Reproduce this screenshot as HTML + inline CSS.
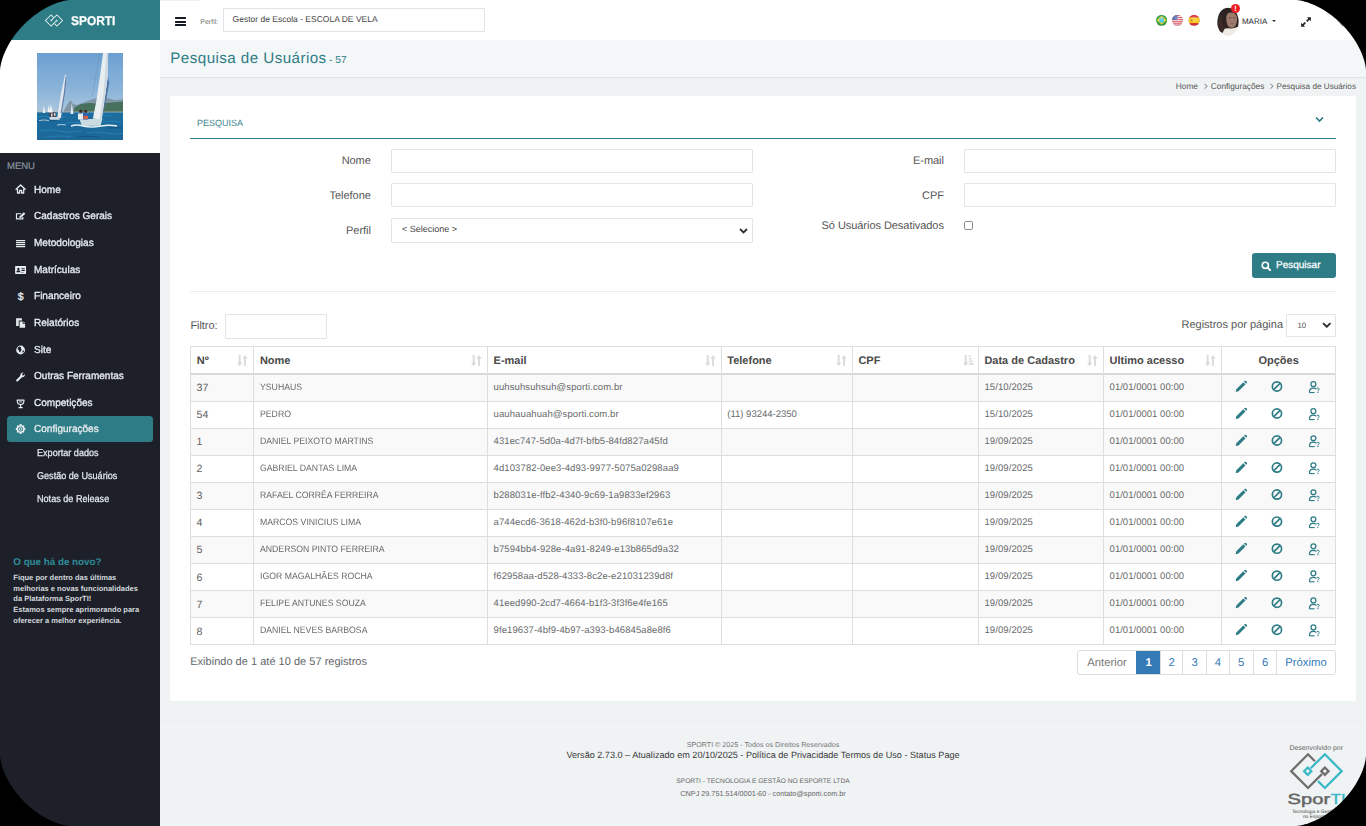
<!DOCTYPE html>
<html lang="pt-br">
<head>
<meta charset="utf-8">
<title>Pesquisa de Usuários</title>
<style>
*{box-sizing:border-box;margin:0;padding:0}
html,body{width:1366px;height:826px;overflow:hidden;background:#f0f3f4}
body{font-family:"Liberation Sans",sans-serif;color:#4f4f4f;position:relative;font-size:11px;text-rendering:geometricPrecision}
#screen{position:absolute;left:0;top:0;width:1366px;height:826px;background:#f0f3f4;overflow:hidden}
.corner{position:absolute;width:72px;height:72px;z-index:50}
.corner.tl{left:0;top:0;background:radial-gradient(circle at 100% 100%,rgba(0,0,0,0) 70.4px,#000 71.4px)}
.corner.tr{right:0;top:0;background:radial-gradient(circle at 0 100%,rgba(0,0,0,0) 70.4px,#000 71.4px)}
.corner.bl{left:0;bottom:0;background:radial-gradient(circle at 100% 0,rgba(0,0,0,0) 70.4px,#000 71.4px)}
.corner.br{right:0;bottom:0;background:radial-gradient(circle at 0 0,rgba(0,0,0,0) 70.4px,#000 71.4px)}
span,div{white-space:nowrap}
/* sidebar */
#side{position:absolute;left:0;top:0;width:160px;height:826px;background:#1d2029}
#brand{position:absolute;left:0;top:0;width:160px;height:40px;background:#2e7c86}
#brand .t{position:absolute;left:71.4px;top:13.6px;font-size:12.6px;line-height:14px;font-weight:bold;color:#fff;-webkit-text-stroke:.25px #fff;transform:scaleX(.945);transform-origin:0 0}
#brand svg{position:absolute;left:43px;top:12px;width:22px;height:17px}
#club{position:absolute;left:0;top:40px;width:160px;height:113px;background:#fff}
#club svg{position:absolute;left:37px;top:13px;width:86px;height:87px}
#menuh{position:absolute;left:7px;top:161px;font-size:9.5px;line-height:11px;color:#8a93a0;-webkit-text-stroke:.2px #8a93a0}
.mi{position:absolute;left:33.8px;font-size:10.2px;line-height:12px;color:#e6ecef;-webkit-text-stroke:.32px #e6ecef;transform:scaleX(.985);transform-origin:0 0}
.mic{position:absolute;left:15px;width:12px;height:12px}
.sub{position:absolute;left:37px;font-size:9.9px;line-height:12px;color:#e4eaed;-webkit-text-stroke:.25px #e4eaed;transform:scaleX(.92);transform-origin:0 0}
#active{position:absolute;left:7px;top:416px;width:146px;height:26px;background:#2e7c86;border-radius:3.5px}
#news{position:absolute;left:13.3px;top:557.2px;font-size:9.8px;line-height:12px;font-weight:bold;color:#2e8d99}
.nb{position:absolute;left:13.3px;font-size:7.5px;line-height:10.8px;font-weight:bold;color:#d3d8dc}
/* header */
#top{position:absolute;left:160px;top:0;width:1206px;height:40px;background:#fff}
#burger{position:absolute;left:14.7px;top:17px;width:11px;height:9px}
#burger i{position:absolute;left:0;width:11px;height:2px;background:#151b24;border-radius:.6px}
#plabel{position:absolute;left:40.3px;top:18.2px;font-size:7px;line-height:9px;color:#777}
#psel{position:absolute;left:63.3px;top:8.3px;width:261.4px;height:24.2px;border:1px solid #e3e4e6;background:#fff;border-radius:1px}
#psel span{position:absolute;left:8.3px;top:5px;font-size:8.5px;line-height:10px;color:#444}
.flag{position:absolute;top:14.8px;width:11.6px;height:11.6px}
#avatar{position:absolute;left:1056.5px;top:7.5px;width:22px;height:28.5px}
#badge{position:absolute;left:1070.8px;top:4.1px;width:9.2px;height:9.2px;border-radius:50%;background:#ee1c25;color:#fff;font-size:7.5px;font-weight:bold;line-height:9.2px;text-align:center}
#uname{position:absolute;left:1081.9px;top:17px;font-size:8px;line-height:10px;color:#2f2f2f}
#caret{position:absolute;left:1112px;top:20.1px;width:0;height:0;border-left:2px solid transparent;border-right:2px solid transparent;border-top:2px solid #333}
#expand{position:absolute;left:1140px;top:16px;width:12px;height:12px}
#title{position:absolute;left:160px;top:40px;width:1206px;height:37.7px;background:#f4f7f7;border-bottom:1px solid #dfe2e8}
#title h1{position:absolute;left:10.3px;top:8.6px;font-size:15.2px;line-height:20px;font-weight:normal;color:#2e7c86;letter-spacing:.43px}
#title h1 small{font-size:10.3px;letter-spacing:0;margin-left:-.6px}
.crumb{position:absolute;top:80.5px;font-size:8.3px;line-height:11px;color:#555}
.card{position:absolute;left:170px;top:96px;width:1186px;height:605.3px;background:#fff;border-radius:3px}
/* form */
#ptitle{position:absolute;left:197px;top:117.5px;font-size:9px;line-height:11px;color:#3d8791}
#pline{position:absolute;left:190px;top:138px;width:1146px;height:1.2px;background:#2e7c86}
#chev{position:absolute;left:1314.5px;top:116px;width:9px;height:7px}
.lbl{position:absolute;font-size:11px;line-height:14px;color:#555;text-align:right;letter-spacing:-.05px}
.inp{position:absolute;border:1px solid #e4e5e7;background:#fff;border-radius:1px}
#hr{position:absolute;left:190px;top:290.8px;width:1146px;height:1px;background:#ececec}
#btn{position:absolute;left:1252px;top:253px;width:84px;height:24.8px;background:#2e7c86;border-radius:3px}
#btn span{position:absolute;left:24px;top:7.4px;font-size:10px;line-height:12px;color:#fff;-webkit-text-stroke:.25px #fff}
#btn svg{position:absolute;left:8.6px;top:7.6px;width:10.6px;height:10.6px}
#cb{position:absolute;left:964px;top:221px;width:8.6px;height:8.6px;border:1px solid #8a8a8a;border-radius:1.8px;background:#fff}
.selchev{position:absolute;width:9px;height:6px}
/* table */
.tbl{position:absolute;left:0;top:0}
.row{position:absolute;left:190.4px;width:1145.1px}
.c{position:absolute;top:var(--ty);font-size:9.5px;line-height:11px;color:#676a6c}
.c.n{font-size:10.6px;top:calc(var(--ty) + .2px);line-height:13px;color:#5f5f5f}
.c.nm{font-size:9.25px;transform:scaleX(.94);transform-origin:0 0}
.c.em{letter-spacing:.1px}
.c.ph{letter-spacing:0}
.c.dt{letter-spacing:.1px}
.c.la{letter-spacing:.03px}
.ic{position:absolute;top:calc(var(--ty) - .6px);width:12px;height:12px}
.ic.pen{left:1044.6px}
.ic.ban{left:1080.5px}
.ic.usr{left:1117px}
.hl{position:absolute;left:190.1px;width:1145.9px;height:1px;background:#dedede}
.hl2{position:absolute;left:190.1px;width:1145.9px;height:2.2px;top:372.6px;background:#d8d8d8}
.vl{position:absolute;top:345.9px;width:1px;height:298.8px;background:#dedede}
.th{position:absolute;top:355px;font-size:11px;line-height:13px;font-weight:bold;color:#4a4a4a}
.sort{position:absolute;top:355.2px;width:11px;height:11.3px}
#info{position:absolute;left:190.2px;top:655px;font-size:11px;line-height:14px;color:#62666a;letter-spacing:.02px}
#pag{position:absolute;left:1077.2px;top:650.3px;height:24.6px;width:258.6px;border:1px solid #ddd;border-radius:3px;background:#fff;overflow:hidden}
#pag span{position:absolute;top:0;height:22.6px;line-height:24.4px;font-size:11.3px;color:#337ab7;text-align:center;border-left:1px solid #ddd}
/* footer */
#fline{position:absolute;left:160px;top:720.6px;width:1206px;height:1px;background:#eceeef}
.ft{position:absolute;left:160px;width:1206px;text-align:center}

</style>
</head>
<body>
<div id="screen">
<svg width="0" height="0" style="position:absolute">
<defs>
<symbol id="i-home" viewBox="0 0 12 12"><path d="M1.500 6.300 6 2 10.500 6.300" fill="none" stroke="#e6ecef" stroke-width="1.400" stroke-linecap="round" stroke-linejoin="round"/><path d="M2.900 5.800V10H5V7.400H7V10H9.100V5.800" fill="none" stroke="#e6ecef" stroke-width="1.300" stroke-linejoin="round"/></symbol>
<symbol id="i-edit" viewBox="0 0 12 12"><path d="M6.600 3.700H1.900V8.800H8.200V7" fill="none" stroke="#e6ecef" stroke-width="1.150"/><path d="M4.700 8 5.100 6.300 9.200 2.300 10.700 3.800 6.500 7.700Z" fill="#e6ecef"/></symbol>
<symbol id="i-list" viewBox="0 0 12 12"><path d="M1.450 2h9.100v1.250h-9.100zM1.450 4h9.100v1.250h-9.100zM1.450 6h9.100v1.250h-9.100zM1.450 8h9.100v1.250h-9.100z" fill="#e6ecef"/></symbol>
<symbol id="i-card" viewBox="0 0 12 12"><path d="M1.200 2.100h9.600a.7.700 0 0 1 .7.700v6.400a.7.700 0 0 1-.7.700H1.200a.7.700 0 0 1-.7-.7V2.800a.7.700 0 0 1 .7-.7Z M3.800 3.700a1.150 1.150 0 1 0 .01 0Z M1.800 8.300h4c0-1.500-.7-2.100-2-2.100s-2 .6-2 2.100Z M6.900 4.300h3.300v.9H6.900Z M6.900 6.100h3.300v.9H6.900Z M6.900 7.900h2v.6h-2Z" fill="#e6ecef" fill-rule="evenodd"/></symbol>
<symbol id="i-copy" viewBox="0 0 12 12"><path d="M1.500 1.300H7.300V3.500H4.100V8.900H1.500Z" fill="#e6ecef"/><path d="M5 4.400H8.100V6.800H10.500V10.700H5Z M8.900 4.400 10.500 6H8.900Z" fill="#e6ecef"/></symbol>
<symbol id="i-globe" viewBox="0 0 12 12"><circle cx="6" cy="6" r="4.400" fill="#e6ecef"/><path d="M3.300 3.400 5 2.600 6.600 3.300 6.200 4.700 7.200 5.800 6 7.200 5.800 8.600 4.600 7.800 4.300 6.200 3 5.200Z M7.800 6.700 9.400 6.400 9.300 7.800 8 9Z" fill="#1c1f28"/></symbol>
<symbol id="i-wrench" viewBox="0 0 12 12"><path d="M2.600 9.400 6.600 5.400" stroke="#e6ecef" stroke-width="2.100" stroke-linecap="round"/><path d="M10.300 3.100 8.900 4.500 7.700 4.300 7.500 3.100 8.900 1.700A2.600 2.600 0 0 0 5.800 5L7 6.200A2.600 2.600 0 0 0 10.300 3.100Z" fill="#e6ecef"/></symbol>
<symbol id="i-trophy" viewBox="0 0 12 12"><path d="M2.600 2.200H9.400C9.400 4.700 8 6.500 6 6.500S2.600 4.700 2.600 2.200Z" fill="none" stroke="#e6ecef" stroke-width="1.200" stroke-linejoin="round"/><path d="M6 6.500V9.500M3.900 9.700H8.100" stroke="#e6ecef" stroke-width="1.200" fill="none"/><path d="M4.300 3.100H7.700C7.600 4.300 7 5.200 6 5.200S4.400 4.300 4.300 3.100Z" fill="#e6ecef" opacity=".5"/></symbol>
<symbol id="i-cog" viewBox="0 0 12 12"><g fill="#e6ecef"><path d="M6 1.100 7 1.300 7.300 2.300 8.200 2.700 9.200 2.200 9.900 2.900 9.400 3.900 9.800 4.800 10.800 5.100V6.900L9.800 7.200 9.400 8.100 9.900 9.100 9.200 9.800 8.200 9.300 7.300 9.700 7 10.700 6 10.900 5 10.700 4.700 9.700 3.800 9.300 2.800 9.800 2.100 9.100 2.600 8.100 2.200 7.200 1.200 6.900V5.100L2.200 4.800 2.600 3.900 2.100 2.900 2.800 2.200 3.800 2.700 4.700 2.300 5 1.300Z M6 3.500a2.500 2.500 0 1 0 .01 0Z M6 4.300a1.700 1.700 0 1 1-.01 0Z M6 5.200a.8.800 0 1 0 .01 0Z" fill-rule="evenodd"/></g></symbol>
<symbol id="i-pen" viewBox="0 0 12 12"><path d="M.4 11.600 1.100 8.700 8.100 1.700 10.300 3.900 3.300 10.900Z M8.800 1 9.600 .2a.75.750 0 0 1 1.050 0L11.800 1.350a.75.750 0 0 1 0 1.050L11 3.200Z" fill="#2e7c86"/></symbol>
<symbol id="i-ban" viewBox="0 0 12 12"><circle cx="6" cy="6" r="4.600" fill="none" stroke="#2e7c86" stroke-width="1.700"/><path d="M2.800 9.200 9.200 2.800" stroke="#2e7c86" stroke-width="1.700"/></symbol>
<symbol id="i-usr" viewBox="0 0 12 13"><circle cx="5.400" cy="3.700" r="2.450" fill="none" stroke="#2e7c86" stroke-width="1.250"/><path d="M1.500 12.200V11.300C1.500 9 3 7.700 5.300 7.700c1.100 0 2 .3 2.700 .9M1.500 12.100H6.600" fill="none" stroke="#2e7c86" stroke-width="1.250"/><path d="M8.600 8.800c.1-.8 .7-1.200 1.300-1.200 .7 0 1.300 .5 1.300 1.200 0 1-1.300 1-1.300 2.100" fill="none" stroke="#2e7c86" stroke-width="1"/><circle cx="9.900" cy="12" r=".65" fill="#2e7c86"/></symbol>
<symbol id="i-sort" viewBox="0 0 11 11.300"><path d="M1.700 0h2v7.600h1.700L2.700 11.300 0 7.600h1.700Z M7 11.300h2V3.700h1.700L8 0 5.300 3.700H7Z" fill="#dcdcdc"/></symbol>
<symbol id="i-sorta" viewBox="0 0 11 11.300"><path d="M1.700 0h2v7.600h1.700L2.700 11.300 0 7.600h1.700Z" fill="#dcdcdc"/><path d="M5.700 .2h2v1.700h-2zM5.700 2.900h2.900v1.700H5.700zM5.700 5.600h4v1.700h-4zM5.700 8.200h5.100v1.700H5.700z" fill="#dcdcdc"/></symbol>
</defs>
</svg>

<div id="side">
  <div id="brand">
    <svg viewBox="43 12 22 17" fill="none" stroke="#d9eaec" stroke-width="1.050" stroke-linejoin="miter"><path d="M53.500 17.300 51.100 14.900 45.500 20.500 51.100 26.100 56.300 20.900"/><path d="M51.700 19.900 56.900 14.900 62.500 20.500 56.900 26.100 54.500 23.700"/><circle cx="51.300" cy="20.400" r=".9" fill="#d9eaec" stroke="none"/><circle cx="56.700" cy="20.600" r=".9" fill="#d9eaec" stroke="none"/></svg>
    <span class="t">SPORTI</span>
  </div>
  <div id="club">
    <svg viewBox="0 0 86 87" preserveAspectRatio="none"><defs><linearGradient id="sky" x1="0" y1="0" x2="0" y2="1"><stop offset="0" stop-color="#6a9fd1"/><stop offset=".55" stop-color="#86b1d8"/><stop offset="1" stop-color="#aac7de"/></linearGradient><linearGradient id="sea" x1="0" y1="0" x2="0" y2="1"><stop offset="0" stop-color="#1d6d9f"/><stop offset=".5" stop-color="#1a6a9c"/><stop offset="1" stop-color="#1c6596"/></linearGradient><filter id="bl" x="-5%" y="-5%" width="110%" height="110%"><feGaussianBlur stdDeviation=".35"/></filter><clipPath id="cp"><rect width="86" height="87"/></clipPath></defs>
      <g clip-path="url(#cp)"><g filter="url(#bl)">
      <rect x="-2" y="-2" width="90" height="62" fill="url(#sky)"/>
      <path d="M26 59 L30 52 L33.500 46.900 L36 51 L40 52 L52 47.500 L58 45.500 L70 45 L78 47 L88 46 L88 59Z" fill="#8195a8"/>
      <path d="M36 59 L38 54 L44 51 L52 50 L60 50.500 L70 50 L80 49 L88 48.500 L88 59Z" fill="#476f5d"/>
      <rect x="-2" y="58.600" width="90" height="1" fill="#b9b5a8"/>
      <rect x="-2" y="59.400" width="90" height="30" fill="url(#sea)"/>
      <path d="M0 64 q8 -1.500 14 0 t14 0 M30 70 q8 -1.500 16 0 M2 78 q10 -2 20 0 t22 0 M50 80 q10 -2 20 0 t16 0 M60 63 q8 -1 16 0 M10 84 q12 -2 24 0 M66 69 q8 -1.500 18 0" stroke="#2c86b6" stroke-width="1.100" fill="none" opacity=".8"/>
      <path d="M0 68 q10 -1.500 20 0 M40 84 q10 -1.500 22 0 M70 75 q8 -1 16 0" stroke="#124f7d" stroke-width="1" fill="none" opacity=".7"/>
      <path d="M71 23 L72.200 30 L69 48 L66 60 L64.500 60 L68.500 40Z" fill="#4f74a6"/>
      <path d="M66.200 -1 L71.100 -1 L70.600 24 L68 44 L64.600 66.800 L55.900 65.400 L59.500 47 L63.300 21Z" fill="#e9eef1"/>
      <path d="M69.500 0 L71.100 0 L70.600 24 L68 44 L64.600 66.800 L62.500 66.500 L66.500 40Z" fill="#cfd9e2"/>
      <path d="M54 25 L60.500 26 M63 0 L55 44" stroke="#6f8aa8" stroke-width=".4" fill="none"/>
      <path d="M28.100 21 L29.700 24 L28.200 40 L23.900 65 L20.200 64.400 L23.800 42Z" fill="#e3e9ee"/>
      <path d="M28.600 23 L29.700 24 L28.200 40 L24.800 60 L23.600 60 L26.800 40Z" fill="#5e7fa6"/>
      <path d="M6.900 52 L8.300 60 L5.900 60Z M13.800 51 L16 60 L12 60Z M11.500 52 L13 59 L10.500 59Z" fill="#eef2f5"/>
      <path d="M34.700 50 L36.400 61 L33.600 61Z" fill="#e6ecf1"/>
      <path d="M42.600 66.500 L65.600 65.600 L63.500 72.800 L45 72.900Z" fill="#c9dbe0"/>
      <path d="M12.300 64 L23.200 64 L22.500 66.800 L13 66.800Z" fill="#cfdde2"/>
      <path d="M34 73 q6 -2 12 0 q8 2 18 0 q8 -1.500 16 0" stroke="#e6f0f4" stroke-width="1.500" fill="none"/>
      <path d="M2 67.500 q6 -1 10 0 M20 72 q5 -1 9 0" stroke="#d5e6ee" stroke-width=".8" fill="none"/>
      <circle cx="43.800" cy="58.300" r="1.500" fill="#3b2a23"/><circle cx="48.600" cy="58.300" r="1.500" fill="#3b2a23"/>
      <path d="M41 60.500 h5 v6 h-5z" fill="#e9ecee"/><path d="M46.200 60.500 h5 v6 h-5z" fill="#3f5fae"/><path d="M46.500 63 h4.500 v3 h-4.500z" fill="#d3603f"/>
      <path d="M12.300 59.500 h6.700 v4.300 h-6.700z" fill="#4a3f48"/><path d="M14 60.500 h1.500 v3 h-1.500z M17 60 h1.400 v3 h-1.400z" fill="#d9dde2"/>
      </g></g>
    </svg>
  </div>
  <div id="menuh">MENU</div>
  <div id="active"></div>
  <svg class="mic" style="top:183px" viewBox="0 0 12 12"><use href="#i-home" x="-.4"/></svg>
<span class="mi" style="top:184.5px">Home</span>
<svg class="mic" style="top:210px" viewBox="0 0 12 12"><use href="#i-edit" x="-.4"/></svg>
<span class="mi" style="top:211.2px">Cadastros Gerais</span>
<svg class="mic" style="top:238px" viewBox="0 0 12 12"><use href="#i-list" x="-.4"/></svg>
<span class="mi" style="top:237.9px">Metodologias</span>
<svg class="mic" style="top:264px" viewBox="0 0 12 12"><use href="#i-card" x="-.4"/></svg>
<span class="mi" style="top:264.5px">Matrículas</span>
<span class="mi" style="left:17.7px;top:291.0px;font-size:10.5px;transform:none">$</span>
<span class="mi" style="top:291.2px">Financeiro</span>
<svg class="mic" style="top:317px" viewBox="0 0 12 12"><use href="#i-copy" x="-.4"/></svg>
<span class="mi" style="top:317.9px">Relatórios</span>
<svg class="mic" style="top:344px" viewBox="0 0 12 12"><use href="#i-globe" x="-.4"/></svg>
<span class="mi" style="top:344.6px">Site</span>
<svg class="mic" style="top:371px" viewBox="0 0 12 12"><use href="#i-wrench" x="-.4"/></svg>
<span class="mi" style="top:371.3px">Outras Ferramentas</span>
<svg class="mic" style="top:398px" viewBox="0 0 12 12"><use href="#i-trophy" x="-.4"/></svg>
<span class="mi" style="top:397.9px">Competições</span>
<svg class="mic" style="top:423px" viewBox="0 0 12 12"><use href="#i-cog" x="-.4"/></svg>
<span class="mi" style="top:423.7px">Configurações</span>
  <span class="sub" style="top:447.7px">Exportar dados</span>
  <span class="sub" style="top:470.7px">Gestão de Usuários</span>
  <span class="sub" style="top:494.3px">Notas de Release</span>
  <div id="news">O que há de novo?</div>
  <span class="nb" style="top:572.90px">Fique por dentro das últimas</span><span class="nb" style="top:583.69px">melhorias e novas funcionalidades</span><span class="nb" style="top:594.48px">da Plataforma SporTI!</span><span class="nb" style="top:605.27px">Estamos sempre aprimorando para</span><span class="nb" style="top:616.06px">oferecer a melhor experiência.</span>
</div>

<div id="top">
  <div style="position:absolute;left:0;top:0;width:39px;height:1px;background:#efefef"></div><div id="burger"><i style="top:0"></i><i style="top:3.6px"></i><i style="top:7.1px"></i></div>
  <span id="plabel">Perfil:</span>
  <div id="psel"><span>Gestor de Escola - ESCOLA DE VELA</span></div>
  <svg style="position:absolute;left:994px;top:4px;width:90px;height:34px" viewBox="1154 4 90 34">
<defs><radialGradient id="gl" cx=".5" cy=".3" r=".75"><stop offset="0" stop-color="#fff" stop-opacity=".28"/><stop offset=".6" stop-color="#fff" stop-opacity="0"/><stop offset="1" stop-color="#000" stop-opacity=".28"/></radialGradient>
<clipPath id="f1"><circle cx="1161.600" cy="20.300" r="5.550"/></clipPath><clipPath id="f2"><circle cx="1177.500" cy="20.300" r="5.550"/></clipPath><clipPath id="f3"><circle cx="1194.100" cy="20.300" r="5.550"/></clipPath>
<clipPath id="av"><ellipse cx="1227.900" cy="21.800" rx="10.750" ry="14.100"/></clipPath><filter id="b2" x="-10%" y="-10%" width="120%" height="120%"><feGaussianBlur stdDeviation=".45"/></filter></defs>
<g clip-path="url(#f1)"><rect x="1156" y="14.700" width="11.200" height="11.200" fill="#2f9a3a"/><path d="M1161.600 16.100 1166.700 20.300 1161.600 24.500 1156.500 20.300Z" fill="#f1d32c"/><circle cx="1161.600" cy="20.300" r="2.500" fill="#43c3e3"/><rect x="1156" y="14.700" width="11.200" height="11.200" fill="url(#gl)"/></g>
<g clip-path="url(#f2)"><rect x="1171.900" y="14.700" width="11.200" height="11.200" fill="#f5f2f3"/><path d="M1171 15.600h13M1171 17.500h13M1171 19.400h13M1171 21.300h13M1171 23.200h13M1171 25.100h13" stroke="#dc3a4b" stroke-width=".95"/><rect x="1171.900" y="14.700" width="5.600" height="5.200" fill="#5468b0"/><rect x="1171.900" y="14.700" width="11.200" height="11.200" fill="url(#gl)"/></g>
<g clip-path="url(#f3)"><rect x="1188.500" y="14.700" width="11.200" height="11.200" fill="#d7212c"/><rect x="1188.500" y="17.500" width="11.200" height="5.600" fill="#f8cc1f"/><rect x="1190.800" y="19" width="1.700" height="2.500" fill="#c0782a"/><rect x="1188.500" y="14.700" width="11.200" height="11.200" fill="url(#gl)"/></g>
<g clip-path="url(#av)"><g filter="url(#b2)">
<rect x="1216" y="6" width="24" height="32" fill="#e9e5de"/>
<path d="M1216 6h10l-4 8-4 12-2 4Z" fill="#86d6d6"/>
<path d="M1218 36 C1216.500 28 1217 18 1219.500 13 C1222 8 1228 6.500 1232 8 C1236.500 9.500 1239 14 1239 20 L1238.500 30 L1234 29 L1228 31 L1224 36Z" fill="#2f2220"/>
<path d="M1227 14.500 C1229 11.500 1235 12 1236.600 16 C1237.600 19 1237 23 1235.300 26 C1234 28 1230.500 28.500 1228.800 26.800 C1226.500 24.500 1225.500 18 1227 14.500Z" fill="#9c7a6c"/>
<path d="M1229 17.800h2.300M1233.300 17.800h2" stroke="#5a3f36" stroke-width=".8"/><path d="M1230.600 23.500q1.600 .8 3.200 0" stroke="#8a4f48" stroke-width=".8" fill="none"/>
<path d="M1219 37 C1220 31 1224 27.500 1229 28.300 C1233 29 1237 27.500 1240 25.500 L1240 38 L1219 38Z" fill="#eeebe4"/>
<path d="M1217.500 30 C1217 24 1218 17 1220.500 13.500 C1222 18 1222.500 24 1224.500 29 L1222.500 33Z" fill="#3a2a25"/>
</g></g>
</svg>
<div id="badge">!</div>
  <span id="uname">MARIA</span>
  <div id="caret"></div>
  <svg id="expand" viewBox="0 0 12 12"><path d="M6.900 1.200h4v4L9.500 3.800 7.300 6 6.100 4.800 8.300 2.600Z M5.100 10.800h-4v-4l1.400 1.400L4.700 6l1.200 1.200-2.200 2.200Z" fill="#222"/></svg>
<svg style="position:absolute;left:1176px;top:18px;width:9px;height:9px" viewBox="0 0 9 9"><path d="M1.500 1.500 7 8" stroke="#9a9a9a" stroke-width="1.300"/></svg>
</div>
<div id="title"><h1>Pesquisa de Usuários<small> - 57</small></h1></div>
<span class="crumb" style="left:1175.8px">Home</span>
<svg style="position:absolute;left:1203px;top:82px;width:6px;height:9px" viewBox="1203 82 6 9"><path d="M1204.500 84 1207.200 86.300 1204.500 88.600" fill="none" stroke="#666" stroke-width=".85"/></svg>
<span class="crumb" style="left:1210.8px">Configurações</span>
<svg style="position:absolute;left:1269px;top:82px;width:6px;height:9px" viewBox="1269 82 6 9"><path d="M1270.400 84 1273.100 86.300 1270.400 88.600" fill="none" stroke="#666" stroke-width=".85"/></svg>
<span class="crumb" style="left:1276.5px;font-size:8.18px">Pesquisa de Usuários</span>

<div class="card"></div>
<span id="ptitle">PESQUISA</span>
<svg id="chev" viewBox="0 0 9 7"><path d="M1 1.500 4.500 5 8 1.500" fill="none" stroke="#2e7c86" stroke-width="1.700"/></svg>
<div id="pline"></div>
<span class="lbl" style="left:190px;width:180.8px;top:153.8px">Nome</span>
<span class="lbl" style="left:190px;width:180.8px;top:189.1px">Telefone</span>
<span class="lbl" style="left:190px;width:180.8px;top:224.2px">Perfil</span>
<span class="lbl" style="left:763px;width:180.9px;top:153.8px">E-mail</span>
<span class="lbl" style="left:763px;width:180.9px;top:189.1px">CPF</span>
<span class="lbl" style="left:763px;width:180.9px;top:218.8px">Só Usuários Desativados</span>
<div class="inp" style="left:391px;top:149px;width:361.5px;height:24px"></div>
<div class="inp" style="left:391px;top:183px;width:361.5px;height:24px"></div>
<div class="inp" style="left:391px;top:218.2px;width:361.5px;height:24.4px"><span style="position:absolute;left:10px;top:5px;font-size:9px;line-height:11px;color:#444">&lt; Selecione &gt;</span></div>
<svg class="selchev" style="left:739.2px;top:227.6px" viewBox="0 0 9 6"><path d="M1 1 4.500 4.500 8 1" fill="none" stroke="#333" stroke-width="1.800"/></svg>
<div class="inp" style="left:964px;top:149px;width:372px;height:24px"></div>
<div class="inp" style="left:964px;top:183px;width:372px;height:24px"></div>
<div id="cb"></div>
<div id="btn"><svg viewBox="0 0 11 11"><circle cx="4.500" cy="4.500" r="3.200" fill="none" stroke="#fff" stroke-width="1.700"/><path d="M6.800 6.800 10 10" stroke="#fff" stroke-width="2" stroke-linecap="round"/></svg><span>Pesquisar</span></div>
<div id="hr"></div>
<span class="lbl" style="left:190.4px;top:319.3px;text-align:left">Filtro:</span>
<div class="inp" style="left:225.3px;top:314.2px;width:101.4px;height:24.4px"></div>
<span class="lbl" style="left:1181.5px;top:318.3px;text-align:left;letter-spacing:0">Registros por página</span>
<div class="inp" style="left:1286.4px;top:314px;width:49.6px;height:22.6px"><span style="position:absolute;left:10px;top:6px;font-size:7.800px;line-height:10px;color:#555">10</span></div>
<svg class="selchev" style="left:1322px;top:322px;width:9.600px;height:6.400px" viewBox="0 0 9 6"><path d="M1 1 4.500 4.500 8 1" fill="none" stroke="#333" stroke-width="1.800"/></svg>

<div class="tbl">
<div class="row" style="top:374.40px;height:26.80px;background:#f9f9f9;--ty:7.70px"><span class="c n" style="left:6.2px">37</span><span class="c nm" style="left:69.5px">YSUHAUS</span><span class="c em" style="left:303.2px">uuhsuhsuhsuh@sporti.com.br</span><span class="c ph" style="left:536.9px"></span><span class="c dt" style="left:794.0px">15/10/2025</span><span class="c la" style="left:919.2px">01/01/0001 00:00</span></div>
<div class="row" style="top:401.20px;height:27.03px;background:#fff;--ty:7.93px"><span class="c n" style="left:6.2px">54</span><span class="c nm" style="left:69.5px">PEDRO</span><span class="c em" style="left:303.2px">uauhauahuah@sporti.com.br</span><span class="c ph" style="left:536.9px">(11) 93244-2350</span><span class="c dt" style="left:794.0px">15/10/2025</span><span class="c la" style="left:919.2px">01/01/0001 00:00</span></div>
<div class="row" style="top:428.23px;height:27.03px;background:#f9f9f9;--ty:7.93px"><span class="c n" style="left:6.2px">1</span><span class="c nm" style="left:69.5px">DANIEL PEIXOTO MARTINS</span><span class="c em" style="left:303.2px">431ec747-5d0a-4d7f-bfb5-84fd827a45fd</span><span class="c ph" style="left:536.9px"></span><span class="c dt" style="left:794.0px">19/09/2025</span><span class="c la" style="left:919.2px">01/01/0001 00:00</span></div>
<div class="row" style="top:455.26px;height:27.03px;background:#fff;--ty:7.93px"><span class="c n" style="left:6.2px">2</span><span class="c nm" style="left:69.5px">GABRIEL DANTAS LIMA</span><span class="c em" style="left:303.2px">4d103782-0ee3-4d93-9977-5075a0298aa9</span><span class="c ph" style="left:536.9px"></span><span class="c dt" style="left:794.0px">19/09/2025</span><span class="c la" style="left:919.2px">01/01/0001 00:00</span></div>
<div class="row" style="top:482.29px;height:27.03px;background:#f9f9f9;--ty:7.93px"><span class="c n" style="left:6.2px">3</span><span class="c nm" style="left:69.5px">RAFAEL CORRÊA FERREIRA</span><span class="c em" style="left:303.2px">b288031e-ffb2-4340-9c69-1a9833ef2963</span><span class="c ph" style="left:536.9px"></span><span class="c dt" style="left:794.0px">19/09/2025</span><span class="c la" style="left:919.2px">01/01/0001 00:00</span></div>
<div class="row" style="top:509.32px;height:27.03px;background:#fff;--ty:7.93px"><span class="c n" style="left:6.2px">4</span><span class="c nm" style="left:69.5px">MARCOS VINICIUS LIMA</span><span class="c em" style="left:303.2px">a744ecd6-3618-462d-b3f0-b96f8107e61e</span><span class="c ph" style="left:536.9px"></span><span class="c dt" style="left:794.0px">19/09/2025</span><span class="c la" style="left:919.2px">01/01/0001 00:00</span></div>
<div class="row" style="top:536.35px;height:27.03px;background:#f9f9f9;--ty:7.93px"><span class="c n" style="left:6.2px">5</span><span class="c nm" style="left:69.5px">ANDERSON PINTO FERREIRA</span><span class="c em" style="left:303.2px">b7594bb4-928e-4a91-8249-e13b865d9a32</span><span class="c ph" style="left:536.9px"></span><span class="c dt" style="left:794.0px">19/09/2025</span><span class="c la" style="left:919.2px">01/01/0001 00:00</span></div>
<div class="row" style="top:563.38px;height:27.03px;background:#fff;--ty:7.93px"><span class="c n" style="left:6.2px">6</span><span class="c nm" style="left:69.5px">IGOR MAGALHÃES ROCHA</span><span class="c em" style="left:303.2px">f62958aa-d528-4333-8c2e-e21031239d8f</span><span class="c ph" style="left:536.9px"></span><span class="c dt" style="left:794.0px">19/09/2025</span><span class="c la" style="left:919.2px">01/01/0001 00:00</span></div>
<div class="row" style="top:590.41px;height:27.03px;background:#f9f9f9;--ty:7.93px"><span class="c n" style="left:6.2px">7</span><span class="c nm" style="left:69.5px">FELIPE ANTUNES SOUZA</span><span class="c em" style="left:303.2px">41eed990-2cd7-4664-b1f3-3f3f6e4fe165</span><span class="c ph" style="left:536.9px"></span><span class="c dt" style="left:794.0px">19/09/2025</span><span class="c la" style="left:919.2px">01/01/0001 00:00</span></div>
<div class="row" style="top:617.44px;height:27.03px;background:#fff;--ty:7.93px"><span class="c n" style="left:6.2px">8</span><span class="c nm" style="left:69.5px">DANIEL NEVES BARBOSA</span><span class="c em" style="left:303.2px">9fe19637-4bf9-4b97-a393-b46845a8e8f6</span><span class="c ph" style="left:536.9px"></span><span class="c dt" style="left:794.0px">19/09/2025</span><span class="c la" style="left:919.2px">01/01/0001 00:00</span></div>
<svg style="position:absolute;left:1221px;top:374px;width:115px;height:271px" viewBox="1221 374 115 271">
<use href="#i-pen" x="1235.2" y="380.45" width="12" height="12"/><use href="#i-ban" x="1270.95" y="380.45" width="12" height="12"/><use href="#i-usr" x="1308" y="380.45" width="12" height="13"/>
<use href="#i-pen" x="1235.2" y="407.48" width="12" height="12"/><use href="#i-ban" x="1270.95" y="407.48" width="12" height="12"/><use href="#i-usr" x="1308" y="407.48" width="12" height="13"/>
<use href="#i-pen" x="1235.2" y="434.51" width="12" height="12"/><use href="#i-ban" x="1270.95" y="434.51" width="12" height="12"/><use href="#i-usr" x="1308" y="434.51" width="12" height="13"/>
<use href="#i-pen" x="1235.2" y="461.54" width="12" height="12"/><use href="#i-ban" x="1270.95" y="461.54" width="12" height="12"/><use href="#i-usr" x="1308" y="461.54" width="12" height="13"/>
<use href="#i-pen" x="1235.2" y="488.57" width="12" height="12"/><use href="#i-ban" x="1270.95" y="488.57" width="12" height="12"/><use href="#i-usr" x="1308" y="488.57" width="12" height="13"/>
<use href="#i-pen" x="1235.2" y="515.60" width="12" height="12"/><use href="#i-ban" x="1270.95" y="515.60" width="12" height="12"/><use href="#i-usr" x="1308" y="515.60" width="12" height="13"/>
<use href="#i-pen" x="1235.2" y="542.63" width="12" height="12"/><use href="#i-ban" x="1270.95" y="542.63" width="12" height="12"/><use href="#i-usr" x="1308" y="542.63" width="12" height="13"/>
<use href="#i-pen" x="1235.2" y="569.66" width="12" height="12"/><use href="#i-ban" x="1270.95" y="569.66" width="12" height="12"/><use href="#i-usr" x="1308" y="569.66" width="12" height="13"/>
<use href="#i-pen" x="1235.2" y="596.69" width="12" height="12"/><use href="#i-ban" x="1270.95" y="596.69" width="12" height="12"/><use href="#i-usr" x="1308" y="596.69" width="12" height="13"/>
<use href="#i-pen" x="1235.2" y="623.72" width="12" height="12"/><use href="#i-ban" x="1270.95" y="623.72" width="12" height="12"/><use href="#i-usr" x="1308" y="623.72" width="12" height="13"/>
</svg>
<div class="hl" style="top:400.70px"></div>
<div class="hl" style="top:427.73px"></div>
<div class="hl" style="top:454.76px"></div>
<div class="hl" style="top:481.79px"></div>
<div class="hl" style="top:508.82px"></div>
<div class="hl" style="top:535.85px"></div>
<div class="hl" style="top:562.88px"></div>
<div class="hl" style="top:589.91px"></div>
<div class="hl" style="top:616.94px"></div>
<div class="hl" style="top:643.97px"></div>
<div class="hl" style="top:345.9px"></div>
<div class="hl2"></div>
<div class="vl" style="left:190.1px"></div>
<div class="vl" style="left:253.0px"></div>
<div class="vl" style="left:486.9px"></div>
<div class="vl" style="left:721.0px"></div>
<div class="vl" style="left:852.0px"></div>
<div class="vl" style="left:978.1px"></div>
<div class="vl" style="left:1102.9px"></div>
<div class="vl" style="left:1220.8px"></div>
<div class="vl" style="left:1335.0px"></div>
<span class="th" style="left:196.7px">Nº</span>
<svg class="sort" style="left:237.4px" viewBox="0 0 11 11.300"><use href="#i-sort"/></svg>
<span class="th" style="left:259.9px">Nome</span>
<svg class="sort" style="left:471.3px" viewBox="0 0 11 11.300"><use href="#i-sort"/></svg>
<span class="th" style="left:493.6px">E-mail</span>
<svg class="sort" style="left:705.4px" viewBox="0 0 11 11.300"><use href="#i-sort"/></svg>
<span class="th" style="left:727.3px">Telefone</span>
<svg class="sort" style="left:836.4px" viewBox="0 0 11 11.300"><use href="#i-sort"/></svg>
<span class="th" style="left:858.4px">CPF</span>
<svg class="sort" style="left:962.5px" viewBox="0 0 11 11.300"><use href="#i-sorta"/></svg>
<span class="th" style="left:984.4px">Data de Cadastro</span>
<svg class="sort" style="left:1087.3px" viewBox="0 0 11 11.300"><use href="#i-sort"/></svg>
<span class="th" style="left:1109.6px">Ultimo acesso</span>
<svg class="sort" style="left:1205.2px" viewBox="0 0 11 11.300"><use href="#i-sort"/></svg>
<span class="th" style="left:1221.3px;width:114.7px;text-align:center">Opções</span>
</div>
<span id="info">Exibindo de 1 até 10 de 57 registros</span>
<div id="pag">
<span style="left:-1px;width:58.800px;color:#777">Anterior</span>
<span style="left:58px;width:24px;top:-1px;height:24.6px;padding-top:1px;background:#337ab7;color:#fff;font-weight:bold;border-color:#337ab7">1</span>
<span style="left:82px;width:21.900px">2</span>
<span style="left:103.900px;width:23.900px">3</span>
<span style="left:127.800px;width:22.900px">4</span>
<span style="left:150.700px;width:23.600px">5</span>
<span style="left:175px;width:23px">6</span>
<span style="left:198px;width:58.600px">Próximo</span>
</div>
<div id="fline"></div>
<div class="ft" style="top:739.600px;font-size:7.150px;line-height:10px;color:#777">SPORTI © 2025 - Todos os Direitos Reservados</div>
<div class="ft" style="top:749.800px;font-size:9.100px;line-height:11px;color:#3a3a3a">Versão 2.73.0 – Atualizado em 20/10/2025 - Política de Privacidade Termos de Uso - Status Page</div>
<div class="ft" style="top:776.600px;font-size:6.660px;line-height:10px;color:#666">SPORTI - TECNOLOGIA E GESTÃO NO ESPORTE LTDA</div>
<div class="ft" style="top:789px;font-size:7.250px;line-height:10px;color:#666">CNPJ 29.751.514/0001-60 - contato@sporti.com.br</div>
<span style="position:absolute;left:1289.4px;top:743.8px;font-size:6.950px;line-height:9px;color:#666">Desenvolvido por</span>
<svg style="position:absolute;left:1286px;top:750px;width:80px;height:76px" viewBox="1286 750 80 76">
<g fill="none" stroke-width="2.250" stroke-linejoin="miter">
<path d="M1314.90 761.20 L1308.02 754.32 L1291.18 771.15 L1308.02 787.99 L1321.93 774.08" stroke="#6e6e6e"/>
<path d="M1310.66 768.23 L1324.86 754.32 L1341.70 771.15 L1324.86 787.99 L1317.98 781.11" stroke="#3bb8c6"/>
<path d="M1307.73 767.49 L1311.39 771.15 L1307.73 774.81 L1304.07 771.15Z" stroke="#3bb8c6"/>
<path d="M1324.86 767.49 L1328.52 771.15 L1324.86 774.81 L1321.20 771.15Z" stroke="#6e6e6e"/>
</g>
<text x="1287.600" y="803.600" font-family="Liberation Sans" font-size="14.600" fill="#666" stroke="#666" stroke-width=".45" textLength="42.500" lengthAdjust="spacingAndGlyphs">Spor</text>
<text x="1330.800" y="803.600" font-family="Liberation Sans" font-size="14.600" fill="#3bb8c6" stroke="#3bb8c6" stroke-width=".45" textLength="15" lengthAdjust="spacingAndGlyphs">TI</text>
<text x="1291.900" y="812.700" font-family="Liberation Sans" font-size="4.900" fill="#444">Tecnologia e Gestão</text>
<text x="1302.900" y="817.800" font-family="Liberation Sans" font-size="4.900" fill="#444">no Esporte</text>
</svg>

</div>
<svg class="corners" width="1366" height="826" viewBox="0 0 1366 826" style="position:absolute;left:0;top:0;z-index:50;pointer-events:none"><defs><path id="crn" d="M0 0 L0.00 71.00 L0.07 69.56 L0.26 67.69 L0.59 65.62 L1.05 63.40 L1.64 61.09 L2.36 58.70 L3.20 56.25 L4.17 53.75 L5.25 51.23 L6.46 48.68 L7.78 46.13 L9.22 43.58 L10.76 41.04 L12.41 38.52 L14.16 36.03 L16.00 33.57 L17.94 31.16 L19.96 28.79 L22.06 26.48 L24.24 24.24 L26.48 22.06 L28.79 19.96 L31.16 17.94 L33.57 16.00 L36.03 14.16 L38.52 12.41 L41.04 10.76 L43.58 9.22 L46.13 7.78 L48.68 6.46 L51.23 5.25 L53.75 4.17 L56.25 3.20 L58.70 2.36 L61.09 1.64 L63.40 1.05 L65.62 0.59 L67.69 0.26 L69.56 0.07 L71.00 0.00 Z"/></defs><use href="#crn" fill="#000"/><use href="#crn" fill="#000" transform="translate(1366 0) scale(-1 1)"/><use href="#crn" fill="#000" transform="translate(0 826) scale(1 -1)"/><use href="#crn" fill="#000" transform="translate(1366 826) scale(-1 -1)"/></svg>
</body>
</html>
